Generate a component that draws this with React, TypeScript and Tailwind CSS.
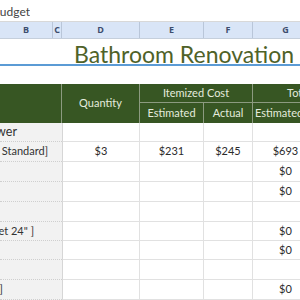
import React from "react";

const font = { fontFamily: 'Lato, "Open Sans", sans-serif' };

type Row = { h: string; name?: string; namePad?: string; nameSize?: string; qty?: string; est?: string; act?: string; tot?: string };

const rows: Row[] = [
  { h: "h-[19px]", name: "Shower", namePad: "pr-[45px]", nameSize: "text-[12.5px] text-[#333]" },
  { h: "h-[20px]", name: "[Shower Kit 34, Standard]", namePad: "pr-[14px]", qty: "$3", est: "$231", act: "$245", tot: "$693" },
  { h: "h-[20px]", tot: "$0" },
  { h: "h-[20px]", tot: "$0" },
  { h: "h-[20px]" },
  { h: "h-[19px]", name: "[Vanity Cabinet 24\" ]", namePad: "pr-[28px]", tot: "$0" },
  { h: "h-[19px]", tot: "$0" },
  { h: "h-[20px]" },
  { h: "h-[20px]", name: "[Mirror ]", namePad: "pr-[59px]", tot: "$0" },
];

export default function App() {
  return (
    <div className="w-[300px] h-[300px] overflow-hidden bg-white" style={font}>
      {/* file bar */}
      <div className="h-[22px] border-b border-[#d8d8d8] flex items-center pt-[2px] bg-white">
        <div className="w-[30px] overflow-hidden flex justify-end whitespace-nowrap text-[12px] text-[#444]">
          Home Renovation Budget
        </div>
      </div>

      {/* column letters */}
      <div className="h-[17px] flex bg-[#d9e5f7] border-b border-[#c5cfdc] text-[9px] font-bold text-[#3d4d6e] leading-[16px]" style={{ fontFamily: '"Open Sans", sans-serif' }}>
        <div className="w-[53px] shrink-0 text-center border-r border-[#b9c6d9]">B</div>
        <div className="w-[9px] shrink-0 text-center border-r border-[#b9c6d9]">C</div>
        <div className="w-[78px] shrink-0 text-center border-r border-[#b9c6d9]">D</div>
        <div className="w-[64px] shrink-0 text-center border-r border-[#b9c6d9]">E</div>
        <div className="w-[49px] shrink-0 text-center border-r border-[#b9c6d9]">F</div>
        <div className="w-[66px] shrink-0 text-center border-r border-[#b9c6d9]">G</div>
        <div className="flex-1" />
      </div>

      {/* title */}
      <div className="h-[25px] flex items-end">
        <div className="pl-[74px] whitespace-nowrap text-[23px] leading-[28px] text-[#4f6228] mb-[-4px]">
          Bathroom Renovation
        </div>
      </div>
      <div className="h-[2px] bg-[#5b9bd5]" />
      <div className="h-[18px]" />

      {/* table header */}
      <div className="h-[39px] flex bg-[#375623] text-[11px] text-[#e4ebdd] overflow-hidden">
        <div className="w-[62px] shrink-0 border-r border-[#8c9a80]" />
        <div className="w-[78px] shrink-0 border-r border-[#8c9a80] flex items-center justify-center">Quantity</div>
        <div className="w-[113px] shrink-0 flex flex-col border-r border-[#8c9a80]">
          <div className="h-[19px] border-b border-[#8c9a80] flex items-center justify-center">Itemized Cost</div>
          <div className="flex-1 flex">
            <div className="w-[64px] shrink-0 border-r border-[#8c9a80] flex items-center justify-center">Estimated</div>
            <div className="flex-1 flex items-center justify-center">Actual</div>
          </div>
        </div>
        <div className="flex-1 min-w-0 flex flex-col">
          <div className="h-[19px] border-b border-[#8c9a80] flex items-center whitespace-nowrap pl-[34px]">Total Cost</div>
          <div className="flex-1 flex items-center whitespace-nowrap pl-[2px]">Estimated</div>
        </div>
      </div>

      {/* body */}
      {rows.map((r, i) => (
        <div key={i} className={`${r.h} flex text-[11px] text-[#2b2b2b]`}>
          <div className={`w-[62px] shrink-0 bg-[#f2f2f2] border-b border-dotted border-[#cfcfcf] overflow-hidden flex items-center justify-end whitespace-nowrap ${r.namePad ?? ""} ${r.nameSize ?? "text-[11px] text-[#333]"}`}>
            {r.name}
          </div>
          <div className="w-[78px] shrink-0 border-l border-l-[#d6d6d6] border-r border-b border-[#e1e1e1] flex items-center justify-center">{r.qty}</div>
          <div className="w-[64px] shrink-0 border-r border-b border-[#e1e1e1] flex items-center justify-center">{r.est}</div>
          <div className="w-[49px] shrink-0 border-r border-b border-[#e1e1e1] flex items-center justify-center">{r.act}</div>
          <div className="w-[66px] shrink-0 border-r border-b border-[#e1e1e1] flex items-center justify-center">{r.tot}</div>
          <div className="flex-1 border-b border-[#e1e1e1]" />
        </div>
      ))}
    </div>
  );
}
